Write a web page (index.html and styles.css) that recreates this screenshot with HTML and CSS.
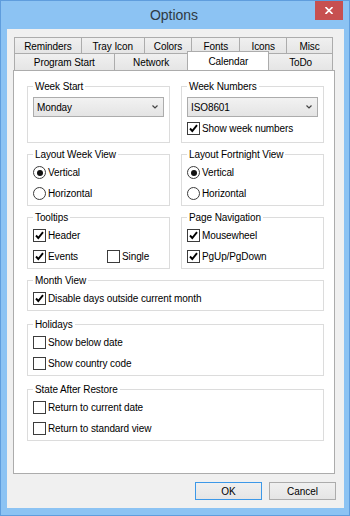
FILE: index.html
```html
<!DOCTYPE html>
<html lang="en">
<head>
    <meta charset="UTF-8">
    <title>Options</title>
    <link rel="stylesheet" href="styles.css">
</head>
<body>
    <div class="window">
        <div class="titlebar">
            <span></span>
            <div class="title">Options</div>
            <button class="close">
                <svg width="8" height="7" viewBox="0 0 8 7"><path d="M0.5 0 L7.5 7 M7.5 0 L0.5 7" stroke="#fff" stroke-width="1.6"/></svg>
            </button>
        </div>
        <div class="client">
            <div class="tabs">
                <div class="tab-row row1">
                    <div class="tab t-reminders">Reminders</div>
                    <div class="tab t-tray">Tray Icon</div>
                    <div class="tab t-colors">Colors</div>
                    <div class="tab t-fonts">Fonts</div>
                    <div class="tab t-icons">Icons</div>
                    <div class="tab t-misc">Misc</div>
                </div>
                <div class="tab-row row2">
                    <div class="tab t-program">Program Start</div>
                    <div class="tab t-network">Network</div>
                    <div class="tab t-calendar active">Calendar</div>
                    <div class="tab t-todo">ToDo</div>
                </div>
            </div>
            <div class="panel">
                <div class="pair">
                    <fieldset class="group top-group">
                        <legend>Week Start</legend>
                        <div class="combo">
                            <span>Monday</span>
                            <svg width="6" height="4" viewBox="0 0 6 4"><path d="M0.5 0.5 L3 3 L5.5 0.5" fill="none" stroke="#444" stroke-width="1.2"/></svg>
                        </div>
                    </fieldset>
                    <fieldset class="group top-group">
                        <legend>Week Numbers</legend>
                        <div class="combo">
                            <span>ISO8601</span>
                            <svg width="6" height="4" viewBox="0 0 6 4"><path d="M0.5 0.5 L3 3 L5.5 0.5" fill="none" stroke="#444" stroke-width="1.2"/></svg>
                        </div>
                        <div class="option after-combo"><span class="box checked"></span>Show week numbers</div>
                    </fieldset>
                </div>

                <div class="pair">
                    <fieldset class="group">
                        <legend>Layout Week View</legend>
                        <div class="option"><span class="radio selected"></span>Vertical</div>
                        <div class="option"><span class="radio"></span>Horizontal</div>
                    </fieldset>
                    <fieldset class="group">
                        <legend>Layout Fortnight View</legend>
                        <div class="option"><span class="radio selected"></span>Vertical</div>
                        <div class="option"><span class="radio"></span>Horizontal</div>
                    </fieldset>
                </div>

                <div class="pair">
                    <fieldset class="group">
                        <legend>Tooltips</legend>
                        <div class="option"><span class="box checked"></span>Header</div>
                        <div class="option-line">
                            <div class="option events"><span class="box checked"></span>Events</div>
                            <div class="option"><span class="box"></span>Single</div>
                        </div>
                    </fieldset>
                    <fieldset class="group">
                        <legend>Page Navigation</legend>
                        <div class="option"><span class="box checked"></span>Mousewheel</div>
                        <div class="option"><span class="box checked"></span>PgUp/PgDown</div>
                    </fieldset>
                </div>

                <fieldset class="group">
                    <legend>Month View</legend>
                    <div class="option"><span class="box checked"></span>Disable days outside current month</div>
                </fieldset>

                <fieldset class="group">
                    <legend>Holidays</legend>
                    <div class="option"><span class="box"></span>Show below date</div>
                    <div class="option"><span class="box"></span>Show country code</div>
                </fieldset>

                <fieldset class="group">
                    <legend>State After Restore</legend>
                    <div class="option"><span class="box"></span>Return to current date</div>
                    <div class="option"><span class="box"></span>Return to standard view</div>
                </fieldset>
            </div>
            <div class="buttons">
                <button class="btn default">OK</button>
                <button class="btn">Cancel</button>
            </div>
        </div>
    </div>
</body>
</html>
```

FILE: styles.css
```css
body {
    margin: 0;
    font-family: "Liberation Sans", Arial, sans-serif;
    font-size: 10px;
    letter-spacing: -0.1px;
    color: #000;
}
.window {
    width: 350px;
    height: 516px;
    box-sizing: border-box;
    border: 1px solid #5f9ddd;
    background: #8cc3f3;
    padding: 0 5px 7px 6px;
    display: flex;
    flex-direction: column;
}
.titlebar {
    height: 28px;
    flex-shrink: 0;
    display: grid;
    grid-template-columns: 1fr auto 1fr;
    align-items: center;
}
.title {
    font-size: 14px;
    letter-spacing: 0;
    color: #2f3a44;
    margin-right: 3px;
}
.close {
    justify-self: end;
    align-self: start;
    width: 28px;
    height: 19px;
    margin-right: 1px;
    padding: 0;
    border: 0;
    background: #c75050;
    display: flex;
    align-items: center;
    justify-content: center;
}
.client {
    flex: 1;
    background: #f0f0f0;
    padding: 8px 9px 8px 6px;
    display: flex;
    flex-direction: column;
}

/* tabs */
.tabs {
    margin: 0 2px 0 1px;
}
.tab-row {
    display: flex;
}
.row1 {
    height: 16px;
}
.row2 {
    height: 17px;
}
.tab {
    box-sizing: border-box;
    border: 1px solid #acacac;
    border-left: 0;
    border-bottom: 0;
    background: linear-gradient(#f0f0f0, #e5e5e5);
    display: flex;
    align-items: center;
    justify-content: center;
    padding-top: 1px;
}
.tab:first-child {
    border-left: 1px solid #acacac;
}
.tab.active {
    background: #fff;
    border-left: 1px solid #acacac;
    margin-left: -1px;
    height: 19px;
    margin-top: -2px;
    position: relative;
    z-index: 1;
}
.t-reminders { width: 68px; }
.t-tray { width: 63px; }
.t-colors { width: 48px; }
.t-fonts { width: 48px; }
.t-icons { width: 47px; }
.t-misc { width: 46px; }
.t-program { width: 101px; }
.t-network { width: 74px; }
.t-calendar { width: 82px; }
.t-todo { width: 64px; }

/* panel */
.panel {
    flex: 1;
    background: #fff;
    border: 1px solid #acacac;
    padding: 9px 10px 0 13px;
    display: flex;
    flex-direction: column;
    gap: 5px;
}
.pair {
    display: grid;
    grid-template-columns: 143px 143px;
    column-gap: 11px;
}
.group {
    margin: 0;
    min-width: 0;
    padding: 1px 5px 1px;
    border: 1px solid #dcdcdc;
}
.panel > .group + .group {
    margin-top: 2px;
}
.group legend {
    padding: 0 2px;
    line-height: 13px;
}
.top-group {
    padding: 4px 5px 3px;
}
.option {
    height: 21px;
    display: flex;
    align-items: center;
    white-space: nowrap;
}
.after-combo {
    margin-top: 1px;
}
.option-line {
    display: flex;
}
.events {
    width: 74px;
}
.box {
    width: 13px;
    height: 13px;
    box-sizing: border-box;
    border: 1px solid #3c3c3c;
    background: #fff;
    margin-right: 2px;
    flex-shrink: 0;
}
.box.checked {
    background: #fff url("data:image/svg+xml,%3Csvg xmlns='http://www.w3.org/2000/svg' width='11' height='11'%3E%3Cpath d='M2 5.5 L4.3 8 L9 2.2' fill='none' stroke='%23000' stroke-width='1.9'/%3E%3C/svg%3E") no-repeat center;
}
.radio {
    width: 13px;
    height: 13px;
    box-sizing: border-box;
    border: 1px solid #3c3c3c;
    border-radius: 50%;
    background: #fff;
    margin-right: 2px;
    flex-shrink: 0;
    display: flex;
    align-items: center;
    justify-content: center;
}
.radio.selected::after {
    content: "";
    width: 6px;
    height: 6px;
    border-radius: 50%;
    background: #111;
}
.combo {
    height: 20px;
    box-sizing: border-box;
    border: 1px solid #acacac;
    background: linear-gradient(#f2f2f2, #e4e4e4);
    padding: 0 5px 0 3px;
    display: flex;
    align-items: center;
    justify-content: space-between;
}

/* dialog buttons */
.buttons {
    display: flex;
    justify-content: flex-end;
    gap: 7px;
    margin: 8px -1px 0 0;
}
.btn {
    width: 67px;
    height: 18px;
    padding: 0;
    border: 1px solid #acacac;
    background: linear-gradient(#f0f0f0, #e5e5e5);
    font: inherit;
    color: #000;
}
.btn.default {
    border-color: #3c98e8;
}
```
